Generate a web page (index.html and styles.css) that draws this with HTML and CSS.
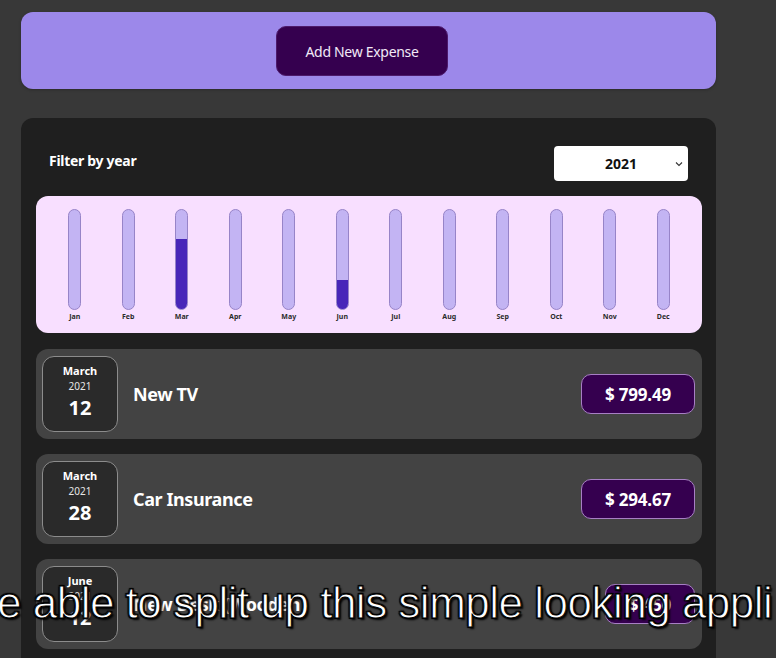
FILE: index.html
```html
<!DOCTYPE html>
<html>
<head>
<meta charset="utf-8">
<link rel="stylesheet" href="styles.css">
</head>
<body>
<div class="app">
  <div class="new-expense">
    <button class="add-btn">Add New Expense</button>
  </div>
  <div class="expenses">
    <div class="filter">
      <span class="filter-label">Filter by year</span>
      <div class="select"><span>2021</span><svg class="chev" width="8" height="6" viewBox="0 0 8 6"><path d="M1 1.5 L4 4.5 L7 1.5" fill="none" stroke="#333" stroke-width="1.1"/></svg></div>
    </div>
    <div class="chart">
      <div class="bar"><div class="track"></div><span>Jan</span></div>
      <div class="bar"><div class="track"></div><span>Feb</span></div>
      <div class="bar"><div class="track"><div class="fill" style="height:71%"></div></div><span>Mar</span></div>
      <div class="bar"><div class="track"></div><span>Apr</span></div>
      <div class="bar"><div class="track"></div><span>May</span></div>
      <div class="bar"><div class="track"><div class="fill" style="height:29%"></div></div><span>Jun</span></div>
      <div class="bar"><div class="track"></div><span>Jul</span></div>
      <div class="bar"><div class="track"></div><span>Aug</span></div>
      <div class="bar"><div class="track"></div><span>Sep</span></div>
      <div class="bar"><div class="track"></div><span>Oct</span></div>
      <div class="bar"><div class="track"></div><span>Nov</span></div>
      <div class="bar"><div class="track"></div><span>Dec</span></div>
    </div>
    <div class="item">
      <div class="date"><div class="month">March</div><div class="year">2021</div><div class="day">12</div></div>
      <div class="title">New TV</div>
      <div class="price">$ 799.49</div>
    </div>
    <div class="item">
      <div class="date"><div class="month">March</div><div class="year">2021</div><div class="day">28</div></div>
      <div class="title">Car Insurance</div>
      <div class="price">$ 294.67</div>
    </div>
    <div class="item">
      <div class="date"><div class="month">June</div><div class="year">2021</div><div class="day">12</div></div>
      <div class="title">New Desk (Wooden)</div>
      <div class="price">$ 450</div>
    </div>
  </div>
</div>
<div class="subtitle">e able to split up this simple looking appli</div>
</body>
</html>
```
FILE: styles.css
```css
html, body {
  margin: 0;
  padding: 0;
  background: #383838;
  height: 658px;
  overflow: hidden;
  font-family: "Noto Sans", "Open Sans", sans-serif;
}
.app {
  padding: 12px 0 0 21px;
  width: 695px;
}
.new-expense {
  background: #9c88ea;
  border-radius: 12px;
  height: 77px;
  display: flex;
  align-items: center;
  justify-content: center;
  padding-right: 13px;
  box-sizing: border-box;
  box-shadow: 0 1px 3px rgba(0,0,0,0.25);
}
.add-btn {
  background: #35004f;
  color: #f1e9f7;
  border: 1px solid #4d1a6b;
  border-radius: 10px;
  width: 172px;
  height: 50px;
  font-family: "Noto Sans", sans-serif;
  font-size: 14px;
  letter-spacing: -0.3px;
  margin-top: 1px;
}
.expenses {
  margin-top: 29px;
  background: #1f1f1f;
  border-radius: 12px;
  padding: 28px 14px 20px 15px;
  height: 600px;
}
.filter {
  display: flex;
  justify-content: space-between;
  align-items: center;
  padding: 0 0 0 13px;
  height: 35px;
}
.filter-label {
  color: #fff;
  font-weight: 700;
  font-size: 14px;
  letter-spacing: -0.3px;
  margin-bottom: 6px;
}
.select {
  width: 134px;
  height: 35px;
  margin-right: 14px;
  background: #fff;
  border-radius: 4px;
  display: flex;
  align-items: center;
  justify-content: center;
  position: relative;
  font-weight: 700;
  font-size: 14px;
  color: #111;
}
.chev {
  position: absolute;
  right: 5px;
  top: 15px;
}
.chart {
  margin-top: 15px;
  background: #f8dfff;
  border-radius: 12px;
  height: 137px;
  box-sizing: border-box;
  padding: 13px 12px 0 12px;
  display: grid;
  grid-template-columns: repeat(12, 1fr);
}
.bar {
  display: flex;
  flex-direction: column;
  align-items: center;
}
.track {
  width: 13px;
  height: 101px;
  box-sizing: border-box;
  border: 1px solid #9784c8;
  border-radius: 12px;
  background: #c3b4f3;
  overflow: hidden;
  display: flex;
  flex-direction: column;
  justify-content: flex-end;
}
.fill {
  background: #4826b9;
  width: 100%;
}
.bar span {
  font-size: 7px;
  font-weight: 700;
  color: #2b2b2b;
  margin-top: 2px;
}
.item {
  margin-top: 15px;
  background: #434343;
  border-radius: 12px;
  height: 90px;
  display: flex;
  align-items: center;
  padding: 0 7px 0 6px;
  box-sizing: border-box;
}
.chart + .item { margin-top: 16px; }
.date {
  width: 76px;
  height: 76px;
  box-sizing: border-box;
  border: 1px solid #8c8c8c;
  border-radius: 12px;
  background: #2a2a2a;
  color: #fff;
  display: flex;
  flex-direction: column;
  align-items: center;
  justify-content: center;
  line-height: 1;
}
.month {
  font-size: 11px;
  font-weight: 700;
  margin-top: -6px;
}
.year {
  font-size: 10px;
  margin-top: 5px;
  color: #e6e6e6;
}
.day {
  font-size: 20px;
  font-weight: 700;
  margin-top: 7px;
}
.title {
  flex: 1;
  color: #fff;
  font-size: 18px;
  font-weight: 700;
  margin-left: 15px;
  letter-spacing: -0.4px;
}
.price {
  background: #35004f;
  border: 1px solid #a77fc4;
  border-radius: 10px;
  color: #fff;
  font-weight: 700;
  font-size: 17px;
  height: 40px;
  box-sizing: border-box;
  padding: 0 23px;
  display: flex;
  align-items: center;
  letter-spacing: -0.2px;
}
.subtitle {
  position: absolute;
  left: -3px;
  top: 578px;
  white-space: nowrap;
  font-family: "Liberation Sans", Arial, sans-serif;
  font-size: 44px;
  letter-spacing: -0.5px;
  color: #fff;
  -webkit-text-stroke: 1px #000;
  text-shadow: 2px 2px 2px #000, -1px -1px 1px #000, 1px -1px 1px #000, -1px 1px 1px #000;
}
```
